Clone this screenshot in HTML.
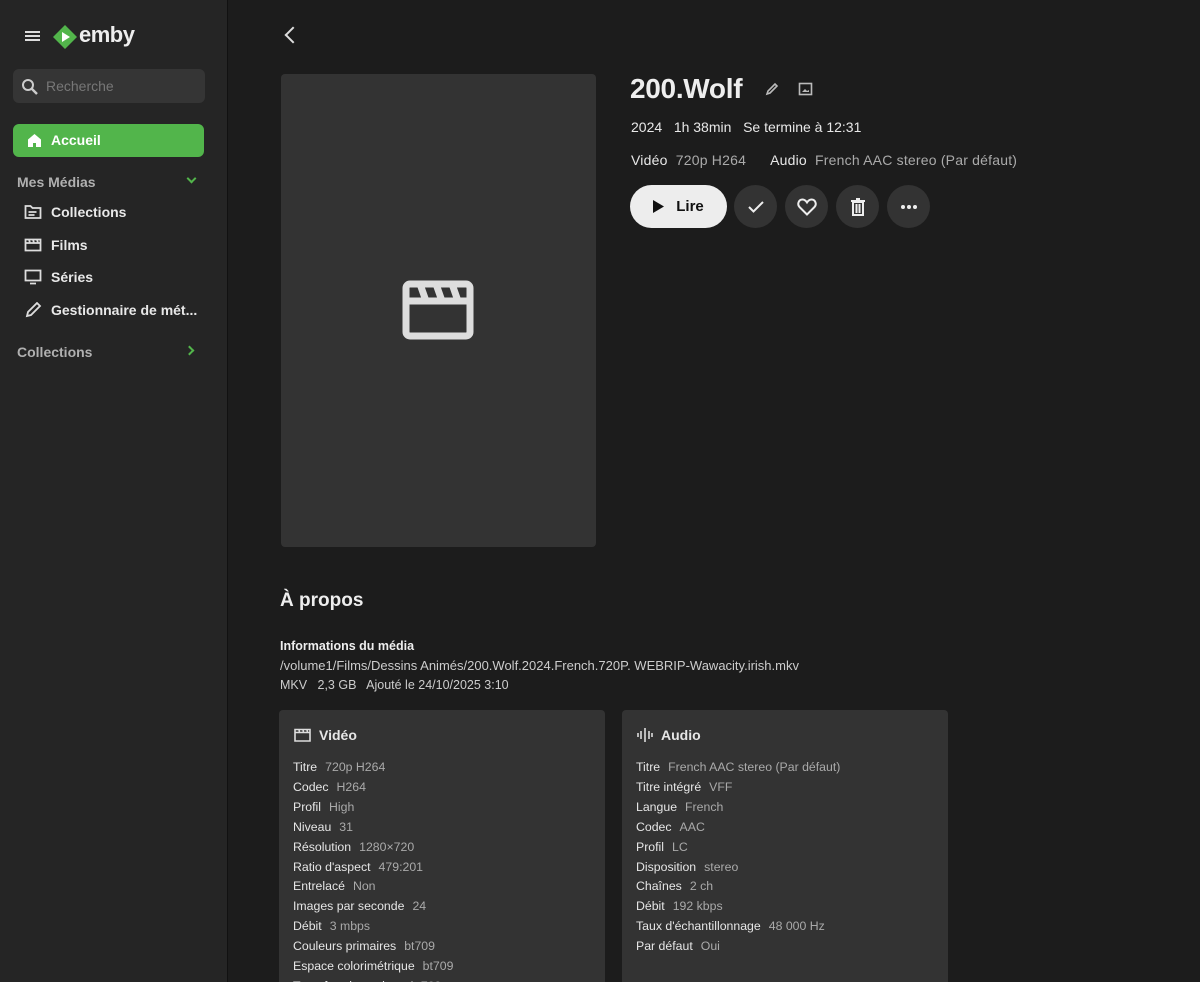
<!DOCTYPE html>
<html style="width:1200px;height:982px;overflow:hidden"><head><meta charset="utf-8"><style>
*{margin:0;padding:0;box-sizing:border-box}
body{width:1200px;height:982px;overflow:hidden;background:#1c1c1c;font-family:"Liberation Sans",sans-serif;color:#e6e6e6;position:relative}
.sb{position:absolute;left:0;top:0;width:228px;height:982px;background:#252525;border-right:1px solid #111}
.abs{position:absolute}
.nav{position:absolute;left:24px;font-size:14px;font-weight:bold;color:#e8e8e8;display:flex;align-items:center;gap:9px}
.sec{position:absolute;left:17px;font-size:14px;font-weight:bold;color:#b0b0b0}
.btn{position:absolute;top:185px;width:43px;height:43px;border-radius:50%;background:#333;display:flex;align-items:center;justify-content:center}
.card{position:absolute;top:710px;width:326px;height:272px;background:#333;border-radius:4px 4px 0 0;overflow:hidden}
.card h3{position:absolute;left:15px;top:17px;font-size:14px;font-weight:bold;display:flex;align-items:center;gap:8px}
.rows{position:absolute;left:14px;top:48px;font-size:12.3px;line-height:19.9px}
.rows span{color:#aaa;margin-left:8px}
</style></head><body>
<div class="sb">
<div class="abs" style="left:25px;top:31px;width:15px;height:2px;background:#ddd;box-shadow:0 4px #ddd,0 8px #ddd"></div>
<svg class="abs" style="left:52px;top:24px" width="26" height="26" viewBox="0 0 26 26"><path d="M13 1L25 13 13 25 1 13Z" fill="#52b54b"/><path d="M10 8v10l8-5z" fill="#fff"/></svg>
<div class="abs" style="left:79px;top:22px;font-size:22px;font-weight:bold;color:#eee;letter-spacing:-0.5px">emby</div>
<div class="abs" style="left:13px;top:69px;width:192px;height:34px;background:#353535;border-radius:6px"></div>
<svg class="abs" style="left:21px;top:78px" width="18" height="18" viewBox="0 0 18 18"><circle cx="7" cy="7" r="5" stroke="#ccc" stroke-width="2" fill="none"/><path d="M11 11l5 5" stroke="#ccc" stroke-width="2.4"/></svg>
<div class="abs" style="left:46px;top:78px;font-size:14px;color:#777">Recherche</div>
<div class="abs" style="left:13px;top:124px;width:191px;height:33px;background:#52b54b;border-radius:6px"></div>
<div class="nav" style="left:27px;top:132px;color:#fff"><svg width="15" height="15" viewBox="0 0 15 15"><path d="M7.5 1L1 6.5V14h5v-4h3v4h5V6.5z" fill="#fff"/></svg>Accueil</div>
<div class="sec" style="top:174px">Mes Médias</div>
<div class="abs" style="left:188px;top:175px;width:7px;height:7px;border-right:2px solid #52b54b;border-bottom:2px solid #52b54b;transform:rotate(45deg)"></div>
<div class="nav" style="top:204px"><svg width="18" height="16" viewBox="0 0 18 16"><path d="M1.5 2h5l2 2h8v10h-15z M4.5 8h8 M4.5 11h6" stroke="#ddd" stroke-width="1.8" fill="none"/></svg>Collections</div>
<div class="nav" style="top:237px"><svg width="18" height="16" viewBox="0 0 18 16"><path d="M1.5 2.5h15v11h-15z M1.5 6h15 M5 2.5l1 3.5 M9 2.5l1 3.5 M13 2.5l1 3.5" stroke="#ddd" stroke-width="1.8" fill="none"/></svg>Films</div>
<div class="nav" style="top:269px"><svg width="18" height="16" viewBox="0 0 18 16"><path d="M1.5 1.5h15v10h-15z M6 14.5h6" stroke="#ddd" stroke-width="1.8" fill="none"/></svg>Séries</div>
<div class="nav" style="top:302px"><svg width="18" height="16" viewBox="0 0 18 16"><path d="M3 14l1-4 9-9 3 3-9 9z" stroke="#ddd" stroke-width="1.8" fill="none"/></svg>Gestionnaire de mét...</div>
<div class="sec" style="top:344px">Collections</div>
<div class="abs" style="left:186px;top:347px;width:7px;height:7px;border-right:2px solid #52b54b;border-bottom:2px solid #52b54b;transform:rotate(-45deg)"></div>
</div>

<div class="abs" style="left:287px;top:29px;width:12px;height:12px;border-left:2.5px solid #ddd;border-bottom:2.5px solid #ddd;transform:rotate(45deg)"></div>
<div class="abs" style="left:281px;top:74px;width:315px;height:473px;background:#333;border-radius:4px"></div>
<svg class="abs" style="left:402px;top:280px" width="72" height="60" viewBox="0 0 72 60"><rect x="4" y="4" width="64" height="52" rx="4" stroke="#ddd" stroke-width="7" fill="none"/><path d="M4 21h64 M18 4l6 17 M34 4l6 17 M50 4l6 17" stroke="#ddd" stroke-width="7"/></svg>

<div class="abs" style="left:630px;top:73px;font-size:28px;font-weight:bold;color:#eee;letter-spacing:-0.3px">200.Wolf</div>
<svg class="abs" style="left:765px;top:82px" width="14" height="14" viewBox="0 0 14 14"><path d="M2 12l1-3 7-7 2 2-7 7z" stroke="#bbb" stroke-width="1.6" fill="none"/></svg>
<svg class="abs" style="left:798px;top:82px" width="15" height="14" viewBox="0 0 15 14"><rect x="1.5" y="1.5" width="12" height="11" stroke="#bbb" stroke-width="1.6" fill="none"/><path d="M4 10l3-3 2 2 2-1v2z" fill="#bbb"/></svg>
<div class="abs" style="left:631px;top:119px;font-size:14px;color:#e8e8e8">2024&nbsp;&nbsp; 1h 38min&nbsp;&nbsp; Se termine à 12:31</div>
<div class="abs" style="left:631px;top:152px;font-size:14px;color:#e8e8e8;letter-spacing:0.2px">Vidéo <span style="color:#aaa">&nbsp;720p H264</span><span style="margin-left:24px">Audio</span> <span style="color:#aaa">&nbsp;French AAC stereo (Par défaut)</span></div>
<div class="abs" style="left:630px;top:185px;width:97px;height:43px;border-radius:22px;background:#ededed;display:flex;align-items:center;justify-content:center;gap:12px;color:#111;font-size:15px;font-weight:bold"><svg width="11" height="13" viewBox="0 0 11 13"><path d="M0 0v13l11-6.5z" fill="#111"/></svg>Lire</div>
<div class="btn" style="left:734px"><svg width="16" height="12" viewBox="0 0 16 12"><path d="M1 6l4.5 4.5L15 1" stroke="#eee" stroke-width="2" fill="none"/></svg></div>
<div class="btn" style="left:785px"><svg width="20" height="18" viewBox="0 0 20 18"><path d="M10 16.5L2.5 9C0 6.5 1.5 1.5 5.5 1.5c2 0 3.5 1.5 4.5 3 1-1.5 2.5-3 4.5-3 4 0 5.5 5 3 7.5z" stroke="#eee" stroke-width="2" fill="none"/></svg></div>
<div class="btn" style="left:836px"><svg width="16" height="18" viewBox="0 0 16 18"><path d="M1 3h14 M6 1h4 M3 4h10v13H3z M6.5 6v9 M9.5 6v9" stroke="#eee" stroke-width="2" fill="none"/></svg></div>
<div class="btn" style="left:887px"><svg width="16" height="4"><circle cx="2" cy="2" r="2" fill="#eee"/><circle cx="8" cy="2" r="2" fill="#eee"/><circle cx="14" cy="2" r="2" fill="#eee"/></svg></div>

<div class="abs" style="left:280px;top:590px;font-size:19px;font-weight:bold;color:#eee">À propos</div>
<div class="abs" style="left:280px;top:639px;font-size:12.5px;font-weight:bold;color:#eee">Informations du média</div>
<div class="abs" style="left:280px;top:658px;font-size:13px;color:#ccc">/volume1/Films/Dessins Animés/200.Wolf.2024.French.720P. WEBRIP-Wawacity.irish.mkv</div>
<div class="abs" style="left:280px;top:678px;font-size:12.5px;color:#ccc">MKV&nbsp;&nbsp; 2,3 GB&nbsp;&nbsp; Ajouté le 24/10/2025 3:10</div>

<div class="card" style="left:279px">
<h3><svg width="17" height="14" viewBox="0 0 17 14"><path d="M1 1.5h15v11.5H1z M1 4.5h15 M5 1.5l.5 3 M9 1.5l.5 3 M13 1.5l.5 3" stroke="#ddd" stroke-width="1.6" fill="none"/></svg>Vidéo</h3>
<div class="rows">
<div>Titre<span>720p H264</span></div><div>Codec<span>H264</span></div><div>Profil<span>High</span></div><div>Niveau<span>31</span></div><div>Résolution<span>1280×720</span></div><div>Ratio d'aspect<span>479:201</span></div><div>Entrelacé<span>Non</span></div><div>Images par seconde<span>24</span></div><div>Débit<span>3 mbps</span></div><div>Couleurs primaires<span>bt709</span></div><div>Espace colorimétrique<span>bt709</span></div><div>Transfert de couleur<span>bt709</span></div>
</div></div>
<div class="card" style="left:622px">
<h3><svg width="16" height="16" viewBox="0 0 16 16"><path d="M1 6v4 M4 4v8 M8 1v14 M12 4v8 M15 6v4" stroke="#ddd" stroke-width="1.6"/></svg>Audio</h3>
<div class="rows">
<div>Titre<span>French AAC stereo (Par défaut)</span></div><div>Titre intégré<span>VFF</span></div><div>Langue<span>French</span></div><div>Codec<span>AAC</span></div><div>Profil<span>LC</span></div><div>Disposition<span>stereo</span></div><div>Chaînes<span>2 ch</span></div><div>Débit<span>192 kbps</span></div><div>Taux d'échantillonnage<span>48 000 Hz</span></div><div>Par défaut<span>Oui</span></div>
</div></div>
</body></html>
